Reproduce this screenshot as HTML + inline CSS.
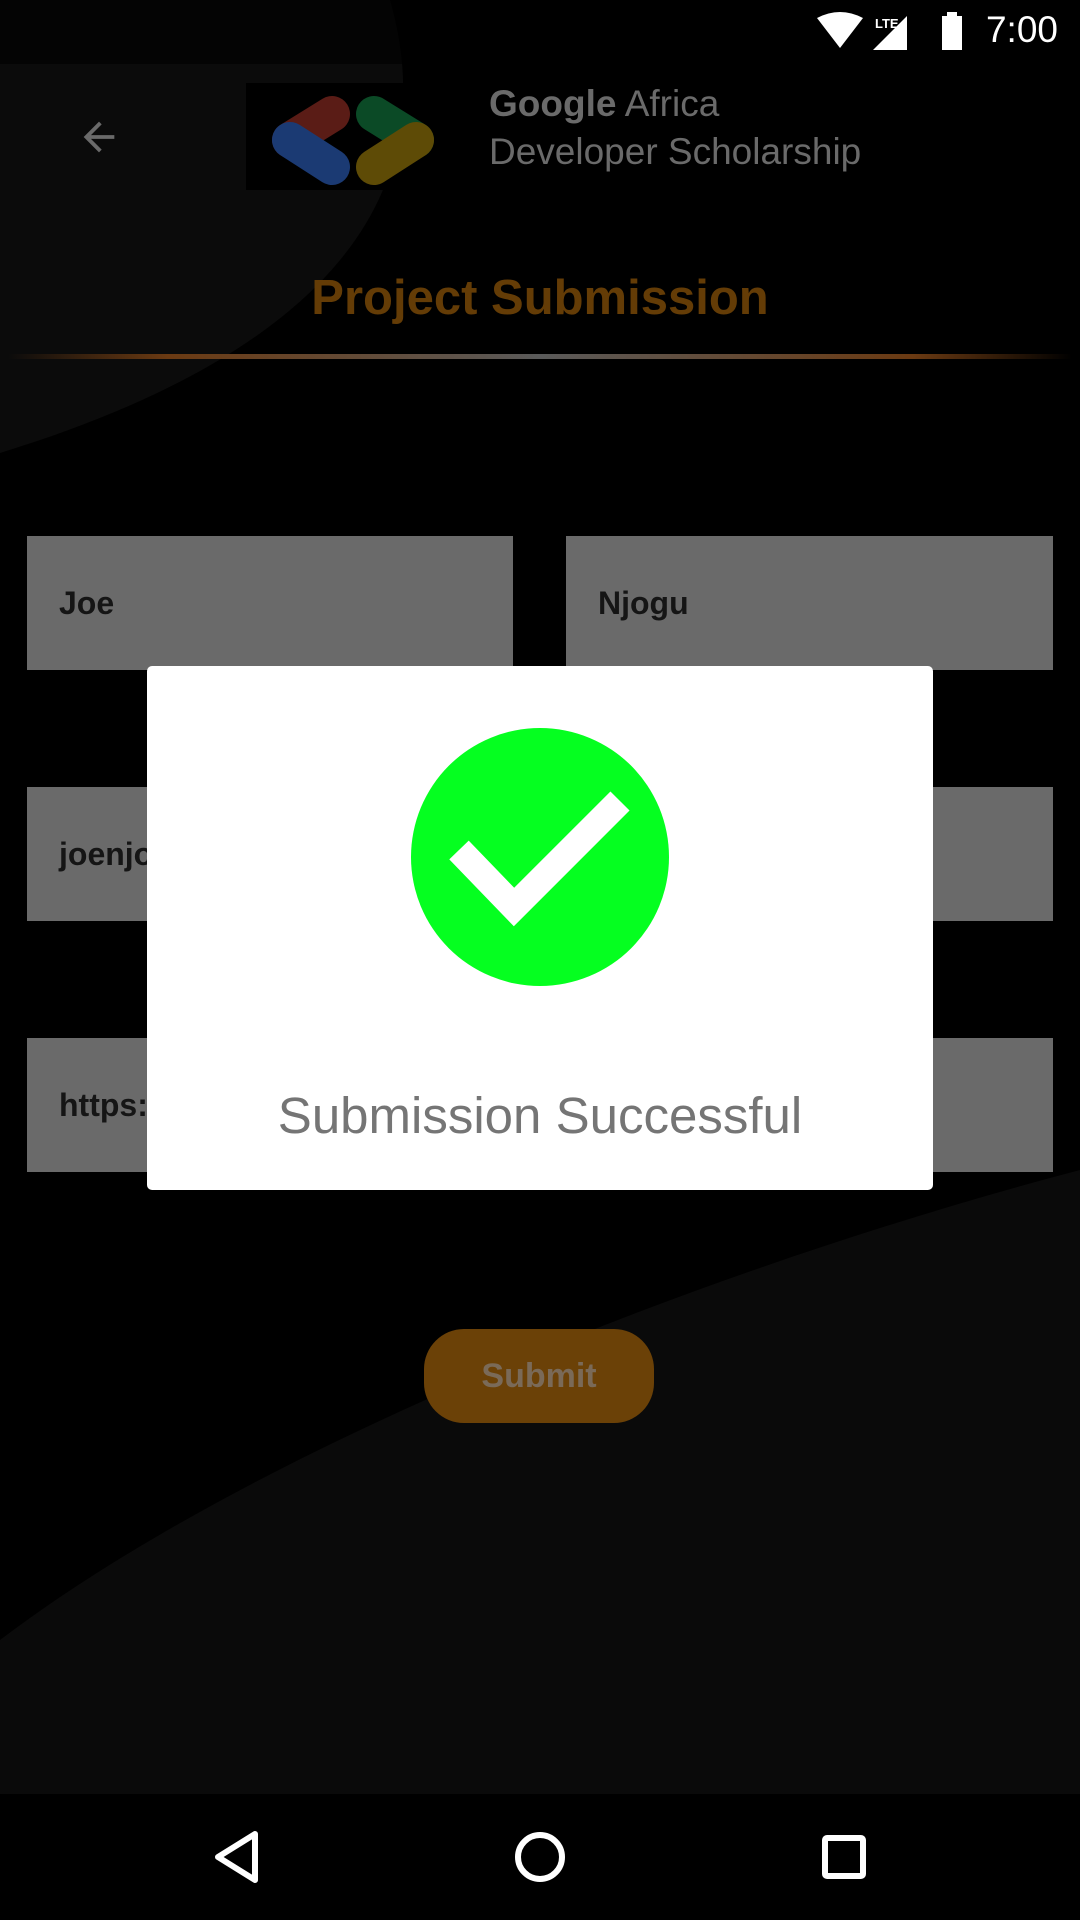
<!DOCTYPE html>
<html><head><meta charset="utf-8"><style>
*{margin:0;padding:0;box-sizing:border-box}
body{width:1080px;height:1920px;background:#000;position:relative;overflow:hidden;font-family:"Liberation Sans",sans-serif}
.a{position:absolute}
.f{position:absolute;background:#6a6a6a;color:#151515;font-size:32px;font-weight:bold;padding-left:32px;display:flex;align-items:center}
</style></head><body>
<svg class="a" style="left:0;top:0" width="1080" height="1920">
<path d="M0 0 H390 C430 140 400 330 0 453 Z" fill="#0b0b0b"/>
<path d="M1080 1170 C700 1270 250 1450 0 1640 V1794 H1080 Z" fill="#0a0a0a"/>
<rect x="0" y="0" width="1080" height="64" fill="#000" opacity="0.6"/>
</svg>
<svg class="a" style="left:815px;top:12px" width="170" height="40" viewBox="0 0 170 40">
<path d="M2 6 Q25 -6 48 6 L25 36 Z" fill="#fff"/>
<text x="60" y="16" fill="#fff" font-size="13" font-family="Liberation Sans" font-weight="bold">LTE</text>
<path d="M58 38 L92 4 V38 Z" fill="#fff"/>
<rect x="127" y="4" width="20" height="34" fill="#fff"/><rect x="132" y="0" width="10" height="5" fill="#fff"/>
</svg>
<div class="a" style="right:22px;top:9px;color:#fff;font-size:37px">7:00</div>
<svg class="a" style="left:76px;top:114px" width="46" height="46" viewBox="0 0 24 24"><path d="M20 11H7.8l5.6-5.6L12 4l-8 8 8 8 1.4-1.4L7.8 13H20z" fill="#6a6a6a"/></svg>
<div class="a" style="left:246px;top:83px;width:205px;height:107px;background:#000"></div>
<svg class="a" style="left:246px;top:83px;overflow:visible" width="205" height="107" viewBox="0 0 205 107">
<g stroke-linecap="round" stroke-width="36" fill="none">
<line x1="86" y1="31" x2="44" y2="57" stroke="#5a1c16"/>
<line x1="44" y1="57" x2="86" y2="84" stroke="#1b3a73"/>
<line x1="128" y1="31" x2="170" y2="57" stroke="#0b4a26"/>
<line x1="170" y1="57" x2="128" y2="84" stroke="#5e4b06"/>
</g></svg>
<div class="a" style="left:489px;top:80px;color:#6a6a6a;font-size:37px;line-height:48px"><b>Google</b> Africa<br>Developer Scholarship</div>
<div class="a" style="left:0;width:1080px;top:270px;text-align:center;color:#643c06;font-size:49px;font-weight:bold">Project Submission</div>
<div class="a" style="left:8px;width:1064px;top:354px;height:5px;background:linear-gradient(90deg,transparent,#6b3a12 15%,#5a5a5a 50%,#6b3a12 85%,transparent)"></div>
<div class="f" style="left:27px;top:536px;width:486px;height:134px">Joe</div>
<div class="f" style="left:566px;top:536px;width:487px;height:134px">Njogu</div>
<div class="f" style="left:27px;top:787px;width:486px;height:134px">joenjogu</div>
<div class="f" style="left:566px;top:787px;width:487px;height:134px"></div>
<div class="f" style="left:27px;top:1038px;width:486px;height:134px">https://</div>
<div class="f" style="left:566px;top:1038px;width:487px;height:134px"></div>
<div class="a" style="left:424px;top:1329px;width:230px;height:94px;border-radius:40px;background:#6b4107;color:#7a6a58;font-size:34px;font-weight:bold;display:flex;align-items:center;justify-content:center">Submit</div>
<div class="a" style="left:147px;top:666px;width:786px;height:524px;background:#fff;border-radius:5px"></div>
<svg class="a" style="left:400px;top:717px" width="280" height="280" viewBox="0 0 280 280">
<circle cx="140" cy="140" r="129" fill="#05ff20"/>
<path d="M59 133 L114 190 L220 84" stroke="#fff" stroke-width="27" fill="none"/>
</svg>
<div class="a" style="left:147px;width:786px;top:1086px;text-align:center;color:#757575;font-size:51px">Submission Successful</div>
<div class="a" style="left:0;top:1794px;width:1080px;height:126px;background:#000"></div>
<svg class="a" style="left:0;top:1794px" width="1080" height="126">
<path d="M255 40 L218 63 L255 86 Z" fill="none" stroke="#fff" stroke-width="6" stroke-linejoin="round"/>
<circle cx="540" cy="63" r="22" fill="none" stroke="#fff" stroke-width="6"/>
<rect x="825" y="44" width="38" height="38" fill="none" stroke="#fff" stroke-width="6" rx="2"/>
</svg>
</body></html>
